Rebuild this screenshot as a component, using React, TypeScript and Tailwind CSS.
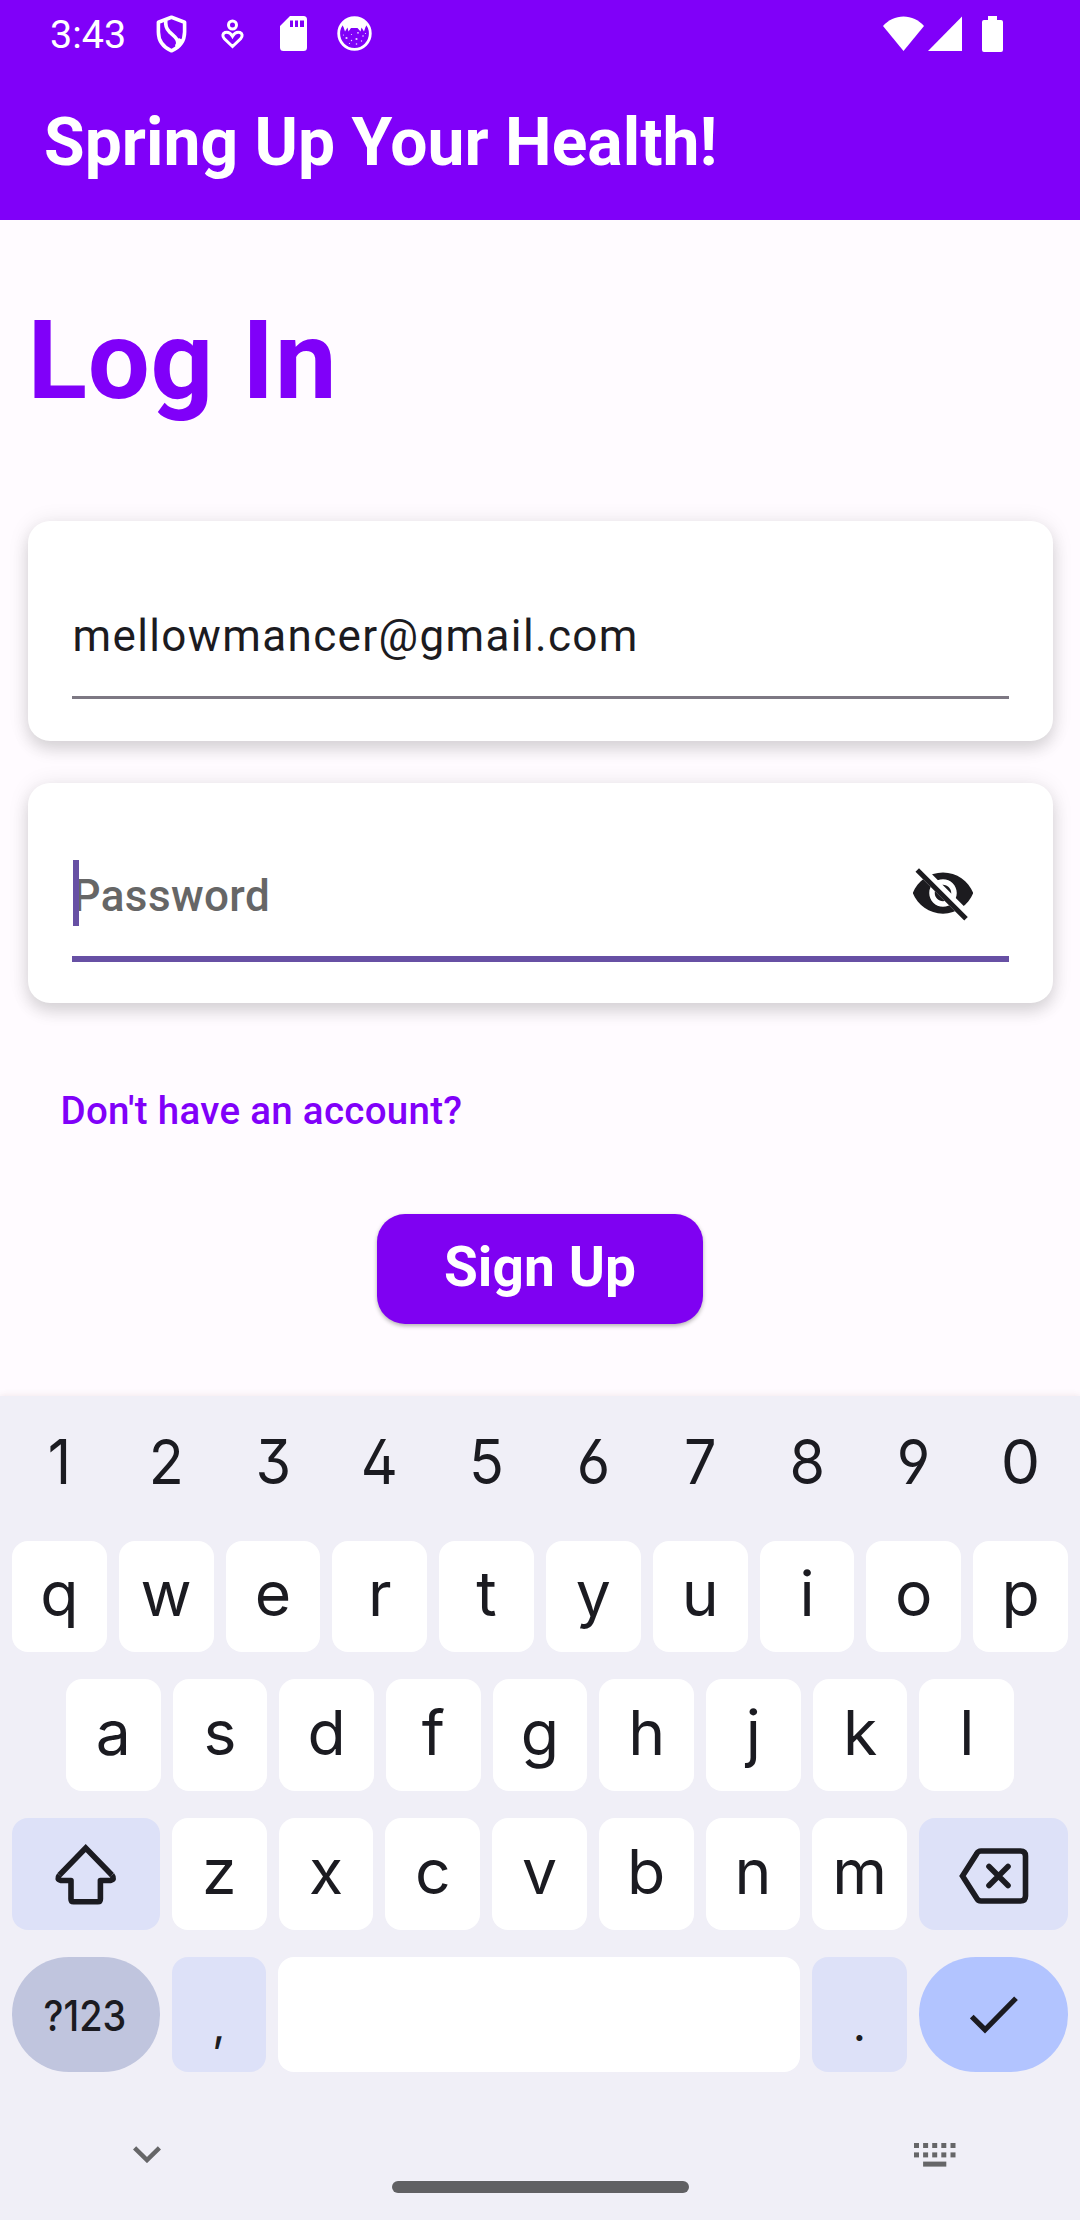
import React from "react";

const digits = "1234567890".split("");
const rowTop = "qwertyuiop".split("");
const rowHome = "asdfghjkl".split("");
const rowBottom = "zxcvbnm".split("");

function StatusBar() {
  return (
    <div className="flex h-[70px] items-center justify-between pr-[77px] pl-[50px] text-white">
      <div className="flex items-center">
        <span className="w-[106px] text-[39.500px] leading-[70px]">3:43</span>
        <svg className="-mt-[3px] h-[38px] w-[31px]" viewBox="0 0 31 38" fill="none" stroke="currentColor" strokeWidth="3.6" strokeLinejoin="round">
          <path d="M15.5 2.2 L28.6 7.2 V17 C28.6 26 23 32.5 15.5 35.8 C8 32.5 2.4 26 2.4 17 V7.2 Z" />
          <path d="M9.8 5.2 C9.2 10.5 9.8 13.2 13.2 16.6 L19 22 C22 25 22.8 28.5 20.8 32.6" />
          <path d="M24.8 24 L21 31.5" strokeWidth="4.5" />
        </svg>
        <svg className="-mt-[2px] ml-[34px] h-[31px] w-[23px]" viewBox="0 0 23 31" fill="none" stroke="currentColor" strokeWidth="3">
          <circle cx="11.5" cy="6" r="4" />
          <path d="M11.5 27.500 L3.4 19.800 C1 17 1.600 14.400 4 13.500 C7 12.6 9.6 14 11.5 17.200 C13.4 14 16 12.6 19 13.500 C21.400 14.400 22 17 19.600 19.800 Z" />
        </svg>
        <svg className="-mt-[3px] ml-[36px] h-[35px] w-[27px]" viewBox="0 0 27 35" fill="currentColor">
          <path fillRule="evenodd" d="M10 0 H23.5 Q27 0 27 3.5 V31.5 Q27 35 23.5 35 H3.5 Q0 35 0 31.5 V10 Z M10 4.5 V11 H13 V4.5 Z M15 4.5 V11 H18 V4.5 Z M20 4.5 V11 H24 V4.5 Z" />
        </svg>
        <svg className="-mt-[3px] ml-[30px] h-[36px] w-[36px]" viewBox="0 0 36 36">
          <circle cx="17.500" cy="17.500" r="15.8" fill="none" stroke="currentColor" strokeWidth="2.800" />
          <path fill="currentColor" d="M4.500 8 C8 3.500 12 1.500 17.500 1.500 C23 1.500 27 3.500 30.500 8 L28.500 11 L27 15.500 L24.500 11.500 L23.500 15.500 L20.500 12 H14 L11.500 15.500 L10.500 11.500 L8 15.500 L6.500 11 Z" />
          <g fill="currentColor" opacity="0.85">
            <circle cx="9.500" cy="22" r="1.1" />
            <circle cx="14.500" cy="18.500" r=".6" />
            <circle cx="21" cy="16.800" r=".9" />
            <circle cx="14.500" cy="24.500" r=".7" />
            <circle cx="19.500" cy="23" r="1.1" />
            <circle cx="26" cy="20" r=".8" />
            <circle cx="24.500" cy="25" r=".7" />
            <circle cx="19.500" cy="28" r=".8" />
            <circle cx="12.500" cy="27.500" r=".6" />
            <circle cx="6.500" cy="19" r=".6" />
            <circle cx="28.500" cy="17.500" r=".6" />
          </g>
        </svg>
      </div>
      <div className="-mt-[3px] flex items-center">
        <svg className="h-[36px] w-[41px]" viewBox="0 0 41 36" fill="currentColor">
          <path d="M0 10 C5.5 4 12.5 .5 20.5 .5 C28.500 .5 35.500 4 41 10 L20.500 35 Z" />
        </svg>
        <svg className="ml-[4px] h-[36px] w-[34px]" viewBox="0 0 34 36" fill="currentColor">
          <path d="M34 .5 V35 H0 Z" />
        </svg>
        <svg className="ml-[20px] h-[36px] w-[21px]" viewBox="0 0 21 36" fill="currentColor">
          <path d="M6 0 H15 V4 H19 Q21 4 21 6 V34 Q21 36 19 36 H2 Q0 36 0 34 V6 Q0 4 2 4 H6 Z" />
        </svg>
      </div>
    </div>
  );
}

function HiddenEye() {
  return (
    <svg className="mr-[33px] -mt-[6px] size-[66px]" viewBox="0 0 24 24">
      <defs>
        <clipPath id="strike-gap">
          <path d="M2 4.270 L19.730 22 L22.270 19.460 L4.540 1.730 V1 H23 V23 H1 V4.270 Z" />
        </clipPath>
      </defs>
      <path
        clipPath="url(#strike-gap)"
        fill="#1c1b1f"
        d="M12 4.500C7 4.500 2.730 7.610 1 12c1.730 4.390 6 7.500 11 7.500s9.270-3.110 11-7.500c-1.730-4.390-6-7.500-11-7.500zM12 17c-2.760 0-5-2.240-5-5s2.240-5 5-5 5 2.240 5 5-2.240 5-5 5zM12 9c-1.660 0-3 1.340-3 3s1.340 3 3 3 3-1.340 3-3-1.340-3-3-3z"
      />
      <path d="M3.270 4.270 L19.740 20.740" stroke="#1c1b1f" strokeWidth="1.8" strokeLinecap="square" />
    </svg>
  );
}

function Card({ children }: { children: React.ReactNode }) {
  return (
    <div className="h-[220px] rounded-[22px] bg-white px-[44px] pt-[54px] shadow-[0_9px_16px_rgba(0,0,0,0.12),0_1px_22px_rgba(0,0,0,0.09)]">
      {children}
    </div>
  );
}

function Key({ children, className = "flex-1 bg-white" }: { children?: React.ReactNode; className?: string }) {
  return <div className={`flex h-full items-center justify-center rounded-[16px] pb-[6px] ${className}`}>{children}</div>;
}

function Keyboard() {
  return (
    <div className="relative h-[824px] bg-[#f0eff7] px-[12px] font-[Inter,sans-serif] text-[62.500px] leading-none text-[#1b1b21] shadow-[0_0_7px_rgba(120,60,60,0.12)]">
      <div className="flex h-[145px] gap-[12px]">
        {digits.map((d) => (
          <div key={d} className={`flex flex-1 items-center justify-center pb-[15px] [font-feature-settings:'ss01'] ${d === "0" ? "" : "scale-x-[0.92]"}`}>{d}</div>
        ))}
      </div>
      <div className="flex h-[111px] gap-[12px]">
        {rowTop.map((k) => <Key key={k}>{k}</Key>)}
      </div>
      <div className="mt-[27px] flex h-[112px] gap-[12px] px-[54px]">
        {rowHome.map((k) => <Key key={k}>{k}</Key>)}
      </div>
      <div className="mt-[27px] flex h-[112px] gap-[12px]">
        <Key className="w-[148px] bg-[#dde1f8]">
          <svg className="mt-[5px] h-[62px] w-[64px]" viewBox="0 0 64 62" fill="none" stroke="currentColor" strokeWidth="5.6" strokeLinejoin="round">
            <path strokeLinejoin="miter" d="M5.500 32 L31.700 5 L57.900 32" />
            <path d="M5.500 32 Q2 36.500 7 37.500 H17 V56 Q17 58.800 19.500 58.800 H43.900 Q46.400 58.800 46.400 56 V37.500 H56.400 Q61.400 36.500 57.900 32" />
          </svg>
        </Key>
        {rowBottom.map((k) => <Key key={k}>{k}</Key>)}
        <Key className="w-[149px] bg-[#dde1f8]">
          <svg className="mt-[10px] h-[58px] w-[72px]" viewBox="0 0 72 58" fill="none" stroke="currentColor" strokeWidth="5.600">
            <path d="M4.500 29 L18.500 7 Q20 4 23 4 H62.500 Q67.500 4 67.500 9 V49 Q67.500 54 62.500 54 H23 Q20 54 18.500 51 Z" />
            <path strokeLinecap="round" d="M31 19.500 L50 38.500 M50 19.500 L31 38.500" />
          </svg>
        </Key>
      </div>
      <div className="mt-[27px] flex h-[115px] gap-[12px]">
        <div className="flex w-[148px] items-center justify-center rounded-[57px] bg-[#c0c5de] pt-[3px] text-[42px] font-medium">
          <span className="-ml-[2px] scale-x-90">?123</span>
        </div>
        <div className="flex w-[94px] items-center justify-center rounded-[16px] bg-[#dde1f8] pt-[19px] text-[46px]">,</div>
        <div className="flex-1 rounded-[16px] bg-white" />
        <div className="flex w-[95px] items-center justify-center rounded-[16px] bg-[#dde1f8] pt-[19px] text-[46px]">.</div>
        <div className="flex w-[149px] items-center justify-center rounded-[57px] bg-[#b2c4ff]">
          <svg className="h-[38px] w-[48px]" viewBox="0 0 48 38" fill="none" stroke="currentColor" strokeWidth="5.200">
            <path d="M1.800 20.500 L15 33.700 L46 2.200" />
          </svg>
        </div>
      </div>
      <div className="flex items-start justify-between pr-[112px] pl-[121px] pt-[70px] text-[#666668]">
        <svg className="mt-[4px] h-[17px] w-[28px]" viewBox="0 0 28 17" fill="none" stroke="currentColor" strokeWidth="4.500">
          <path d="M1.600 1.800 L14 14 L26.400 1.800" />
        </svg>
        <svg className="mt-[1px] h-[24px] w-[42px]" viewBox="0 0 42 24" fill="currentColor">
          {[0, 9.1, 18.2, 27.3, 36.500].map((x) => (
            <React.Fragment key={x}>
              <rect x={x} y="0" width="5" height="5" />
              <rect x={x} y="9.400" width="5" height="5" />
            </React.Fragment>
          ))}
          <rect x="9.100" y="18.600" width="23.200" height="5" />
        </svg>
      </div>
      <div className="mx-auto mt-[14px] h-[12px] w-[297px] rounded-full bg-[#606063]" />
    </div>
  );
}

export default function App() {
  return (
    <div className="h-[2220px] w-[1080px] overflow-hidden bg-[#fffbff] font-[Roboto,sans-serif]">
      <header className="h-[220px] bg-[#8000f9]">
        <StatusBar />
        <h1 className="pl-[44px] text-[66px] leading-[145px] font-bold whitespace-nowrap text-white">Spring Up Your Health!</h1>
      </header>
      <main className="flex h-[1176px] flex-col px-[27.500px] pt-[76px]">
        <h2 className="text-[110px] leading-[129px] font-bold tracking-[0.7px] text-[#8000f9]">Log In</h2>
        <div className="mt-[96px] flex flex-col gap-[41.500px]">
          <Card>
            <div className="flex h-[124px] items-center border-b-[3px] border-[#7d7883] pl-[1px] text-[44px] tracking-[1.375px] text-[#1c1b1f]">
              mellowmancer@gmail.com
            </div>
          </Card>
          <Card>
            <div className="relative flex h-[125px] items-center justify-between border-b-[6px] border-[#6750a4] text-[44px] font-medium text-[#666666]">
              <span className="pl-[1px] tracking-[0.4px]">Password</span>
              <HiddenEye />
              <span className="absolute top-[23px] left-[1px] h-[66px] w-[6px] bg-[#6750a4]" />
            </div>
          </Card>
        </div>
        <a className="mt-[85px] pl-[33px] text-[38.500px] leading-[46px] font-medium tracking-[0.3px] text-[#8000f9]">Don't have an account?</a>
        <button className="mt-[80px] flex h-[110px] w-[326px] items-center justify-center self-center rounded-[28px] bg-[#7f01f2] pb-[2px] text-[55px] font-bold tracking-[0.1px] text-white shadow-[0_2px_4px_rgba(0,0,0,0.3)]">
          Sign Up
        </button>
      </main>
      <Keyboard />
    </div>
  );
}
